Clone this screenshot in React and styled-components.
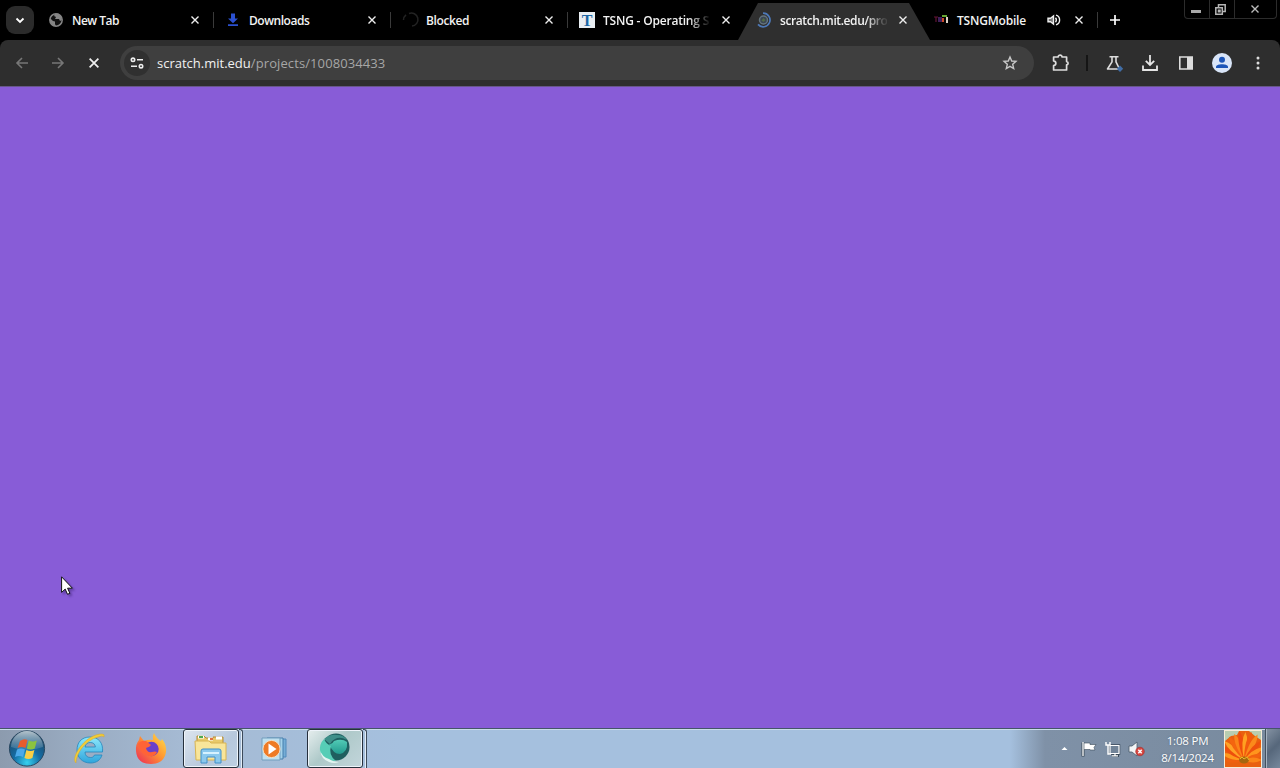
import React from "react";
import styled, { createGlobalStyle, css } from "styled-components";

/* ===========> GLOBAL */
const GlobalStyle = createGlobalStyle`
    * { box-sizing: border-box; }
    body {
        margin: 0;
        overflow: hidden;
        background: #000;
        font-family: "Open Sans", "Noto Sans", sans-serif;
    }
    svg { display: block; flex: none; overflow: visible; }
`

const Desktop = styled.div`
    width: 1280px;
    height: 768px;
    display: flex;
    flex-direction: column;
    overflow: hidden;
`

/* ===========> TAB STRIP */
const TabStrip = styled.div`
    height: 40px;
    flex: none;
    display: flex;
    background: #000;
`
const TabSearch = styled.div`
    width: 28px;
    height: 28px;
    margin: 6px 3px 0 6px;
    border-radius: 9px;
    background: #2b2b2b;
    display: grid;
    place-items: center;
`
const Tab = styled.div`
    width: 177px;
    height: 40px;
    flex: none;
    display: flex;
    align-items: center;
    padding-left: 11px;
    ${(props) => props.$active && css`
        width: 192px;
        margin: 0 -8px 0 -7px;
        padding-left: 18px;
        background: #2f2f2f;
        clip-path: polygon(0 100%, 20px 3px, 171px 3px, 100% 100%);
    `}
`
const Favicon = styled.div`
    width: 16px;
    height: 16px;
    flex: none;
    margin-right: 8px;
`
const Title = styled.div`
    width: ${(props) => props.$width}px;
    flex: none;
    padding-top: 2px;
    white-space: nowrap;
    color: #f2f2f2;
    font-size: 12px;
    font-weight: 600;
    line-height: 18px;
    letter-spacing: ${(props) => props.$spacing}px;
    ${(props) => props.$fade && css`
        mask-image: linear-gradient(to right, #000 80%, rgba(0, 0, 0, 0.12) 98%);
    `}
`
const Audio = styled.div`
    width: 14px;
    height: 14px;
    flex: none;
    margin-right: 9px;
`
const Close = styled.div`
    width: 16px;
    height: 16px;
    margin-left: ${(props) => (props.$tight ? 0 : 8)}px;
    flex: none;
    display: grid;
    place-items: center;
`
const Divider = styled.div`
    width: 1px;
    height: 16px;
    flex: none;
    margin-left: 10px;
    background: #3a3a3a;
`
const NewTab = styled.div`
    width: 32px;
    height: 40px;
    display: grid;
    place-items: center;
`
const WindowControls = styled.div`
    width: 93px;
    height: 19px;
    margin: 0 3px 0 auto;
    display: flex;
    border: 1px solid #2c2c2c;
    border-top: 0;
    border-radius: 0 0 4px 4px;
`
const WindowButton = styled.div`
    width: ${(props) => props.$width}px;
    flex: none;
    padding-right: ${(props) => props.$inset || 0}px;
    display: grid;
    place-items: center;
    & + & { border-left: 1px solid #2c2c2c; }
`

/* ===========> TOOLBAR */
const Toolbar = styled.div`
    height: 46px;
    flex: none;
    display: flex;
    align-items: center;
    background: #2e2e2e;
    border-radius: 8px 8px 0 0;
`
const NavButton = styled.div`
    width: 36px;
    height: 36px;
    display: grid;
    place-items: center;
    &:first-child { margin-left: 4px; }
`
const AddressBar = styled.div`
    width: 914px;
    height: 34px;
    margin-left: 8px;
    padding: 0 16px 0 4px;
    border-radius: 17px;
    display: flex;
    align-items: center;
    background: #3f3f3f;
`
const SiteInfo = styled.div`
    width: 26px;
    height: 26px;
    margin-right: 7px;
    border-radius: 50%;
    display: grid;
    place-items: center;
    background: #303030;
`
const Url = styled.div`
    flex: 1;
    color: #f1f1f1;
    font-size: 13px;
    line-height: 20px;
    span {
        color: #a6a6a6;
        letter-spacing: 0.1px;
    }
`
const Actions = styled.div`
    display: flex;
    align-items: center;
    margin-left: 8px;
`
const Action = styled.div`
    width: 36px;
    height: 36px;
    display: grid;
    place-items: center;
`
const ActionDivider = styled.div`
    width: 2px;
    height: 16px;
    margin: 0 8px;
    background: #151515;
`

/* ===========> PAGE */
const Page = styled.div`
    flex: 1;
    border-top: 1px solid #67578a;
    background: #885cd7;
`
const Cursor = styled.svg`
    position: absolute;
    left: 61px;
    top: 576px;
    filter: drop-shadow(2px 2px 1px rgba(40, 20, 90, 0.4));
`

/* ===========> TASKBAR */
const Taskbar = styled.div`
    height: 40px;
    flex: none;
    display: flex;
    border-top: 1px solid #455569;
    box-shadow: inset 0 1px 0 #c9dbea;
    background: linear-gradient(to right, #8c9bae 0, #98aac0 70px, #a5bad3 180px, #a5c0de 400px, #a5c0de 1010px, #7f91a7 1045px, #788a9e 1280px);
`
const Launcher = styled.div`
    width: ${(props) => props.$width}px;
    padding-right: ${(props) => props.$inset || 0}px;
    display: grid;
    place-items: center;
`
const TaskButton = styled.div`
    width: 56px;
    height: 39px;
    border: 1px solid #26303c;
    border-radius: 3px;
    box-shadow: inset 0 0 0 1px #eef4fa;
    display: grid;
    place-items: center;
    background: ${(props) => props.$active
        ? "linear-gradient(135deg, #e6eeee, #aec9c9 45%, #c2d5db)"
        : "linear-gradient(135deg, #dde5ef, #b7c8dc 60%, #bdcfe2)"};
`
const StackEdge = styled.div`
    width: 4px;
    height: 39px;
    border-right: 1px solid #3c4a5a;
    border-top: 1px solid #3c4a5a;
    border-radius: 0 3px 0 0;
    box-shadow: inset -1px 0 0 #e2edf7;
`
const Tray = styled.div`
    margin-left: auto;
    display: flex;
    align-items: center;
`
const TrayIcon = styled.div`
    width: 24px;
    display: grid;
    place-items: center;
`
const Clock = styled.div`
    width: 76px;
    padding-left: 3px;
    color: #fff;
    font-size: 11.5px;
    line-height: 17px;
    letter-spacing: -0.2px;
    text-align: center;
    text-shadow: 0 0 2px #526377;
`
const UserTile = styled.div`
    width: 38px;
    height: 38px;
    border: 1px solid #f5ecd8;
    overflow: hidden;
`
const ShowDesktop = styled.div`
    width: 15px;
    height: 39px;
    margin-left: 3px;
    border-left: 1px solid #42515f;
    box-shadow: inset 1px 0 0 #a6b3c1;
    background: linear-gradient(135deg, #8593a3, #56677b 50%, #76889c);
`

/* ===========> ICONS */
const CloseIcon = ({ size = 8, color = "#efefef" }) => (
    <svg width={size} height={size} viewBox="0 0 8 8">
        <path d="M.5.5l7 7M7.5.5l-7 7" stroke={color} strokeWidth="1.4" />
    </svg>
)

const GlobeIcon = () => (
    <svg width="16" height="16" viewBox="0 0 16 16">
        <circle cx="8" cy="8" r="6.2" fill="#111" stroke="#858585" strokeWidth="1.5" />
        <path d="M2 6l3 3 2 .5v2.5l1 2H5L2 10zM7 2l-1 2 2 1-1 2h4l1 2 2-1-1-4-3-2.5z" fill="#858585" />
    </svg>
)

const DownloadsIcon = () => (
    <svg width="16" height="16" viewBox="0 0 16 16">
        <path d="M6 1.5h4v5h3l-5 4.8-5-4.8h3zM3 12.3h10v1.8H3z" fill="#2b50d0" />
    </svg>
)

const BlockedSpinner = () => (
    <svg width="16" height="16" viewBox="0 0 16 16">
        <path d="M1.5 8A6.5 6.5 0 0 1 4 2.8M7 1.5A6.5 6.5 0 1 1 10 14" fill="none" stroke="#232323" strokeWidth="1.5" />
    </svg>
)

const TIcon = () => (
    <svg width="16" height="16" viewBox="0 0 16 16">
        <rect width="16" height="16" fill="#e9eef2" />
        <text x="8" y="13.5" textAnchor="middle" fontFamily="Liberation Serif, serif" fontWeight="700" fontSize="16" fill="#1c67a5">T</text>
    </svg>
)

const LoadingIcon = () => (
    <svg width="16" height="16" viewBox="0 0 16 16">
        <circle cx="7.5" cy="8" r="4" fill="#3b4654" stroke="#64747d" strokeWidth="1.5" />
        <path d="M5.5 8.5l2-2.5 2 2-2 2z" fill="#536b45" />
        <path d="M7 1.2a6.8 6.8 0 1 1-5 11.2" fill="none" stroke="#4d79b8" strokeWidth="1.7" />
    </svg>
)

const MobileIcon = () => (
    <svg width="16" height="16" viewBox="0 0 16 16">
        <path d="M1 5h4M3 5v5" stroke="#641436" strokeWidth="1.2" />
        <path d="M6 5v5M8 5v5" stroke="#60308d" strokeWidth="1.3" />
        <path d="M9 4h5" stroke="#65a532" strokeWidth="2" />
        <path d="M10 6v4" stroke="#ce4a27" strokeWidth="2" />
        <path d="M14 5v6" stroke="#ddd2c6" strokeWidth="2" />
    </svg>
)

const AudioIcon = () => (
    <svg width="14" height="14" viewBox="0 0 14 14">
        <path d="M0 5.2h2.5L5.5 3v8L2.5 8.8H0z" fill="#777" stroke="#eee" strokeWidth="1.4" />
        <path d="M7.5 4.8q1.8 2.2 0 4.4M8 2.2a5 5 0 0 1 0 9.6" fill="none" stroke="#eee" strokeWidth="1.4" />
    </svg>
)

const TuneIcon = () => (
    <svg width="14" height="12" viewBox="0 0 14 12">
        <g fill="none" stroke="#eee" strokeWidth="1.6">
            <circle cx="3" cy="2.8" r="1.7" />
            <path d="M7 2.8h6M1 9.2h6" />
            <circle cx="11" cy="9.2" r="1.7" />
        </g>
    </svg>
)

const ArrowIcon = ({ flip }) => (
    <svg width="12" height="12" viewBox="0 0 12 12">
        <path d={flip ? "M0 6h11M6 1l5 5-5 5" : "M12 6H1M6 1L1 6l5 5"} fill="none" stroke="#777" strokeWidth="1.6" />
    </svg>
)

const StarIcon = () => (
    <svg width="16" height="16" viewBox="0 0 16 16">
        <path d="M8 2l1.7 4 4.3.4-3.3 2.9 1 4.3L8 11.4l-3.7 2.2 1-4.3L2 6.4 6.3 6z" fill="none" stroke="#c8c8c8" strokeWidth="1.4" />
    </svg>
)

const PuzzleIcon = () => (
    <svg width="18" height="18" viewBox="0 0 18 18">
        <path d="M2.6 3h4.5c0-2.6 4-2.6 4 0h4.5v4.6c2 .2 2 3 0 3.2V16h-13v-4.3c3-.6 3-4.2 0-4.8z" fill="none" stroke="#ddd" strokeWidth="1.7" strokeLinejoin="round" />
    </svg>
)

const FlaskIcon = () => (
    <svg width="18" height="18" viewBox="0 0 18 18">
        <path d="M4.5 2.7h9M7 3v4.8L2.5 15h12L11 7.8V3" fill="none" stroke="#ddd" strokeWidth="1.6" strokeLinejoin="round" />
        <path d="M15 11.4l3.2 3.4-3.2 3.2-3.2-3.2z" fill="#416da5" />
    </svg>
)

const DownloadIcon = () => (
    <svg width="18" height="18" viewBox="0 0 18 18">
        <path d="M9 1v9.5M4.8 6.8L9 11l4.2-4.2M2 11.5V16h14v-4.5" fill="none" stroke="#e5e5e5" strokeWidth="1.8" />
    </svg>
)

const PanelIcon = () => (
    <svg width="16" height="16" viewBox="0 0 16 16">
        <path d="M1.8 2h12.4v12H1.8z" fill="none" stroke="#ddd" strokeWidth="1.6" />
        <path d="M9 2h5v12H9z" fill="#ddd" />
    </svg>
)

const ProfileIcon = () => (
    <svg width="20" height="20" viewBox="0 0 20 20">
        <circle cx="10" cy="10" r="10" fill="#d9e5f8" />
        <circle cx="10" cy="6.8" r="3" fill="#1c55b8" />
        <path d="M4 15v-1.2c0-3.5 12-3.5 12 0V15z" fill="#1c55b8" />
    </svg>
)

const MenuIcon = () => (
    <svg width="4" height="14" viewBox="0 0 4 14">
        <g fill="#ddd">
            <circle cx="2" cy="2" r="1.5" />
            <circle cx="2" cy="7" r="1.5" />
            <circle cx="2" cy="12" r="1.5" />
        </g>
    </svg>
)

const StartOrb = () => (
    <svg width="38" height="38" viewBox="0 0 38 38">
        <defs>
            <radialGradient id="orb" cx="50%" cy="90%" r="85%">
                <stop offset="0" stopColor="#36d1ef" />
                <stop offset=".45" stopColor="#146da5" />
                <stop offset="1" stopColor="#204461" />
            </radialGradient>
            <linearGradient id="shine" x2="0" y2="1">
                <stop stopColor="#e4eef2" stopOpacity=".75" />
                <stop offset="1" stopColor="#b2cbda" stopOpacity=".15" />
            </linearGradient>
        </defs>
        <circle cx="19" cy="18.5" r="17.6" fill="url(#orb)" stroke="#294861" />
        <path d="M3 17a16 16 0 0 1 32 0Q19 23 3 17z" fill="url(#shine)" />
        <path d="M12 11q4-3 7.5-1l-2 8q-4-2-8 0z" fill="#e65c2d" />
        <path d="M20.8 10.5q4 2 8 0l-2 8q-4 2-8 0z" fill="#8bc33f" />
        <path d="M9 19.5q4-2 8 0l-2 7.5q-4-2-8 0z" fill="#4ba9e9" />
        <path d="M18.4 20q4 2 8 0l-2 8q-4 2-8 0z" fill="#f8cf45" />
    </svg>
)

const ExplorerIcon = () => (
    <svg width="32" height="32" viewBox="0 0 32 32">
        <defs>
            <linearGradient id="ie" x2="0" y2="1">
                <stop stopColor="#8ce8fb" />
                <stop offset="1" stopColor="#2fa5dc" />
            </linearGradient>
        </defs>
        <path fillRule="evenodd" d="M17 4C8 4 4 10 4 17s5 13 13.500 13c6 0 10-3 11.500-8h-7.500c-1 2-2 2.500-4 2.500-3.500 0-5.500-2-5.500-5.500h17.500C30.500 10 25.500 4 17 4zM12 14c.5-3 2.500-4.500 5.200-4.500 3 0 4.800 1.500 5.200 4.500z" fill="url(#ie)" stroke="#2586bd" strokeWidth=".8" />
        <path d="M3 30C-3 25 12 1 29 1q3 0 2 3-1-2-6 0C13 7 3 20 3 30z" fill="#f3ce37" stroke="#d4a52b" strokeWidth=".5" />
    </svg>
)

const FirefoxIcon = () => (
    <svg width="32" height="32" viewBox="0 0 32 32">
        <defs>
            <linearGradient id="fox" x1="1" y1="0" x2="0" y2="1">
                <stop stopColor="#ffe64e" />
                <stop offset=".45" stopColor="#ff9831" />
                <stop offset="1" stopColor="#ed2458" />
            </linearGradient>
        </defs>
        <path d="M19 0q2 5 7 8l1-2q5 6 4 13-2 12-15 12Q2 31 1 18 .5 11 4 7l1-4 4 5q5-2 9-1-1-4 1-7z" fill="url(#fox)" />
        <circle cx="16.5" cy="16" r="7.2" fill="#6b40c9" />
        <path d="M3 11q3-4 8-3l5 4q-1 2-5 3 1 5 6 4 3-1 5 0-2 5-8 4-8-1-11-12z" fill="#ff6336" />
    </svg>
)

const FolderIcon = () => (
    <svg width="34" height="32" viewBox="0 0 34 32">
        <path d="M3 3h7l2 2h7V4h10v22H3z" fill="#e8c96a" stroke="#b48b37" />
        <path d="M4 4h6M14 6h5M22 5h6" stroke="#fff" strokeWidth="3" />
        <path d="M5 4h4" stroke="#4caa51" strokeWidth="2" />
        <path d="M16 6h3" stroke="#df7042" strokeWidth="2" />
        <path d="M1 8h14l2 2h15v17H2z" fill="#f8e59a" stroke="#d8b453" />
        <path d="M7 30V18q0-2 2-2h16q2 0 2 2v12h-6v-6h-8v6z" fill="#8bc9ed" stroke="#418fc9" />
        <path d="M9 20h16" stroke="#d6f2ff" strokeWidth="2" />
    </svg>
)

const MediaIcon = () => (
    <svg width="26" height="26" viewBox="0 0 26 26">
        <path d="M9 3h16v18H9z" fill="#75add6" stroke="#528bbc" />
        <path d="M6 2h16v21H6z" fill="#a4d2eb" stroke="#477fab" />
        <path d="M1 2h18v22H1z" fill="#bfe0ef" stroke="#739ebd" />
        <circle cx="10.5" cy="13" r="8.6" fill="#ee7b25" stroke="#f4dec2" />
        <path d="M7.5 7.5l8 5.5-8 5.5z" fill="#fff" />
    </svg>
)

const SwirlIcon = () => (
    <svg width="34" height="32" viewBox="0 0 34 32">
        <defs>
            <linearGradient id="swirl" x2="0" y2="1">
                <stop stopColor="#52cbb6" />
                <stop offset="1" stopColor="#229a8e" />
            </linearGradient>
        </defs>
        <circle cx="18" cy="14" r="13.5" fill="#1f5f5f" />
        <path d="M6 6q6-5 13-4 7 0 10 5-7-4-12-1-4 2-5 5z" fill="#3e8f89" />
        <path d="M11 11q3 1 5-3 8-3 13 1 1 10-7 12-7 0-11-10z" fill="url(#swirl)" />
        <path d="M6 6q2 5 7 7-3 9 5 15Q6 28 2 19 1 11 6 6z" fill="#56cdb6" />
        <path d="M2 17q2 7 9 9 4 3 10 3-5 2-10 0Q3 26 2 17z" fill="#e3f5f1" />
    </svg>
)

const FlagIcon = () => (
    <svg width="16" height="16" viewBox="0 0 16 16">
        <path d="M3 1.5v14" stroke="#3b4a59" strokeWidth="3" />
        <path d="M4 2h6v1.5h6l-2 3 1 2.5h-5V8.500H4z" fill="#fff" stroke="#3b4a59" strokeWidth=".6" />
        <path d="M3 1v14" stroke="#fff" strokeWidth="1.3" />
    </svg>
)

const NetworkIcon = () => (
    <svg width="16" height="16" viewBox="0 0 16 16">
        <path d="M6 4.5h9v8H6zM8 14.8h7M11 12v3" fill="#6f8194" stroke="#3b4a59" strokeWidth="2.5" />
        <path d="M6 4.5h9v8H6zM8 14.8h6M11 12v3" fill="#718397" stroke="#fff" strokeWidth="1.2" />
        <path d="M2 1v3h4V1M4 4v9h3" fill="none" stroke="#fff" strokeWidth="1.4" />
    </svg>
)

const MutedIcon = () => (
    <svg width="16" height="16" viewBox="0 0 16 16">
        <path d="M1 5h3l5-4v14l-5-4H1z" fill="#f4f6f7" stroke="#4a5a69" strokeWidth=".8" />
        <circle cx="12" cy="10.5" r="4.3" fill="#d74740" stroke="#a02a2a" strokeWidth=".6" />
        <path d="M10.3 8.8l3.4 3.4M13.7 8.8l-3.4 3.4" stroke="#fff" strokeWidth="1.5" />
    </svg>
)

// [angle, length, color]
const petals = [
    [-92, 19, "#f0600f"], [-74, 23, "#ff9a1d"], [-58, 26, "#ee4f0c"], [-46, 27, "#ffa326"],
    [-33, 28, "#f4650f"], [-20, 28, "#fb8418"], [-9, 29, "#ef4d0c"], [3, 28, "#ffa021"],
    [15, 29, "#f25a0e"], [28, 29, "#fb8a1b"], [42, 26, "#ee500d"], [56, 23, "#ff951d"],
    [73, 20, "#f2620f"], [90, 18, "#fb8517"],
]
const FlowerPicture = () => (
    <svg width="36" height="36" viewBox="0 0 36 36">
        <rect width="36" height="36" fill="#e9600f" />
        <path d="M0 0h14l-2 4-6 1-6 5zM24 0h12v9l-6-4z" fill="#b8cdb0" />
        {petals.map(([angle, length, color]) => (
            <path key={angle} d={`M19 29q-5-${length - 9} 0-${length}q5 9 0 ${length}z`} fill={color} transform={`rotate(${angle} 19 29)`} />
        ))}
        <ellipse cx="19" cy="29" rx="5" ry="3.5" fill="#a5660f" />
        <path d="M15 28l2-2 2 2 3-2 2 3" fill="none" stroke="#e9b929" />
    </svg>
)

/* ============================================================================================================= */

const tabs = [
    { title: "New Tab", icon: <GlobeIcon />, spacing: -0.5 },
    { title: "Downloads", icon: <DownloadsIcon />, spacing: -0.45 },
    { title: "Blocked", icon: <BlockedSpinner />, spacing: -0.4 },
    { title: "TSNG - Operating S", icon: <TIcon />, spacing: -0.2, fade: true },
    { title: "scratch.mit.edu/pro", icon: <LoadingIcon />, spacing: -0.4, fade: true, active: true },
    { title: "TSNGMobile", icon: <MobileIcon />, spacing: -0.2, audio: true },
]

const BrowserTab = ({ tab, divider }) => (
    <Tab $active={tab.active}>
        <Favicon>{tab.icon}</Favicon>
        <Title $fade={tab.fade} $width={tab.audio ? 91 : 107} $spacing={tab.spacing}>{tab.title}</Title>
        {tab.audio && <Audio><AudioIcon /></Audio>}
        <Close $tight={tab.audio}><CloseIcon /></Close>
        {divider && <Divider />}
    </Tab>
)

const App = () => {
    return (
        <Desktop>
            <GlobalStyle />

            {/* tab strip */}
            <TabStrip>
                <TabSearch>
                    <svg width="8" height="5" viewBox="0 0 8 5"><path d="M.5.5L4 4 7.5.5" fill="none" stroke="#fff" strokeWidth="1.8" /></svg>
                </TabSearch>
                {tabs.map((tab, i) => (
                    <BrowserTab key={tab.title} tab={tab} divider={i < 3 || i === 5} />
                ))}
                <NewTab>
                    <svg width="10" height="10" viewBox="0 0 10 10"><path d="M5 0v10M0 5h10" stroke="#fff" strokeWidth="1.7" /></svg>
                </NewTab>
                <WindowControls>
                    <WindowButton $width={24} $inset={2}>
                        <svg width="10" height="10" viewBox="0 0 10 10"><path d="M0 7.5h10" stroke="#aaa" strokeWidth="3" /></svg>
                    </WindowButton>
                    <WindowButton $width={25} $inset={3}>
                        <svg width="11" height="11" viewBox="0 0 11 11"><path d="M3.5 3V.8h6.7v6.7H8M.8 3.8h6.5v6.4H.8zM3.5 6.3H5v1.5H3.5z" fill="none" stroke="#b5b5b5" strokeWidth="1.5" /></svg>
                    </WindowButton>
                    <WindowButton $width={42} $inset={2}><CloseIcon color="#bbb" /></WindowButton>
                </WindowControls>
            </TabStrip>

            {/* toolbar */}
            <Toolbar>
                <NavButton><ArrowIcon /></NavButton>
                <NavButton><ArrowIcon flip /></NavButton>
                <NavButton><CloseIcon size={10} /></NavButton>
                <AddressBar>
                    <SiteInfo><TuneIcon /></SiteInfo>
                    <Url>scratch.mit.edu<span>/projects/1008034433</span></Url>
                    <StarIcon />
                </AddressBar>
                <Actions>
                    <Action><PuzzleIcon /></Action>
                    <ActionDivider />
                    <Action><FlaskIcon /></Action>
                    <Action><DownloadIcon /></Action>
                    <Action><PanelIcon /></Action>
                    <Action><ProfileIcon /></Action>
                    <Action><MenuIcon /></Action>
                </Actions>
            </Toolbar>

            {/* page content */}
            <Page />

            {/* taskbar */}
            <Taskbar>
                <Launcher $width={54}><StartOrb /></Launcher>
                <Launcher $width={70}><ExplorerIcon /></Launcher>
                <Launcher $width={59} $inset={6}><FirefoxIcon /></Launcher>
                <TaskButton><FolderIcon /></TaskButton>
                <StackEdge />
                <Launcher $width={64} $inset={2}><MediaIcon /></Launcher>
                <TaskButton $active><SwirlIcon /></TaskButton>
                <StackEdge />
                <Tray>
                    <TrayIcon>
                        <svg width="7" height="3" viewBox="0 0 8 4"><path d="M0 4l4-4 4 4z" fill="#fff" /></svg>
                    </TrayIcon>
                    <TrayIcon><FlagIcon /></TrayIcon>
                    <TrayIcon><NetworkIcon /></TrayIcon>
                    <TrayIcon><MutedIcon /></TrayIcon>
                    <Clock>
                        <div>1:08 PM</div>
                        <div>8/14/2024</div>
                    </Clock>
                    <UserTile><FlowerPicture /></UserTile>
                    <ShowDesktop />
                </Tray>
            </Taskbar>

            <Cursor width="12" height="19" viewBox="0 0 12 19">
                <path d="M.6.8v15.6l3.6-3.3 2.3 5.2 2.4-1-2.3-5.1h4.8z" fill="#fff" stroke="#111" strokeWidth="1" />
            </Cursor>
        </Desktop>
    )
}

export default App
